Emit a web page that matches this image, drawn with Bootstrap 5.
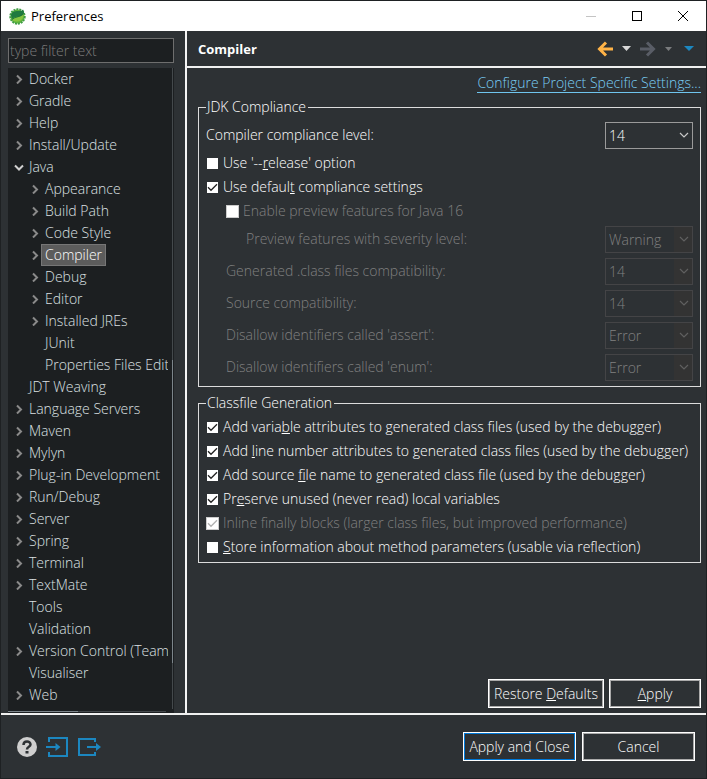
<!DOCTYPE html>
<html lang="en">
<head>
<meta charset="utf-8">
<meta name="viewport" content="width=device-width, initial-scale=1">
<title>Preferences</title>
<link href="https://cdn.jsdelivr.net/npm/bootstrap@5.3.0/dist/css/bootstrap.min.css" rel="stylesheet">
<style>
  :root { --bg: #2d3134; --tree: #1c1f21; --line: #dcdcdc; --fg: #fff; --dim: #808080; }
  body { font-family: "Open Sans", "Noto Sans", sans-serif; font-size: 14px; font-weight: 300; line-height: 20px; background: var(--bg); color: var(--fg); }
  .window-frame { border: 1px solid #1e2123; }
  .title-bar { background: #fff; color: #000; height: 30px; padding-left: 8px; font-weight: 400; font-size: 13px; }
  .app-name { padding-left: 5px; }
  .win-btn { width: 46px; height: 30px; background: none; border: 0; padding: 0; line-height: 0; }
  .sidebar { width: 184px; padding: 7px 11px 0 7px; }
  .filter-box { background: var(--tree); border: 1px solid #6e6e6e; border-radius: 0; color: #ccc; height: 25px; padding: 0 1px; font-size: 14px; font-weight: 300; line-height: 22px; min-height: 0; }
  .filter-box::placeholder { color: #7c7c7c; opacity: 1; }
  .filter-box:focus { background: var(--tree); color: #ccc; box-shadow: none; }
  .tree-box { background: var(--tree); color: #dde1e3; margin-top: 5px; }
  .tree-list li { height: 22px; padding-left: 6px; white-space: nowrap; display: flex; align-items: center; }
  .tree-list .sub-item { padding-left: 22px; }
  .tree-list .leaf { padding-left: 16px; }
  .tree-list .sub-item.leaf { padding-left: 32px; }
  .twisty { width: 10px; height: 10px; flex: none; margin-right: 1px; fill: none; stroke: #8a8a8a; stroke-width: 2; }
  .twisty.open { stroke: #d0d0d0; }
  .tree-list a { color: inherit; text-decoration: none; padding: 0 3px; border: 1px solid transparent; }
  .tree-list .leaf a { margin-left: 1px; }
  .tree-list a.picked { background: #5c5c5c; border-color: #767676; color: #fff; }
  .v-track { width: 1px; background: #44494c; margin: 0 1px 2px 4px; padding-top: 292px; }
  .v-thumb { background: #7c858b; height: 303px; }
  .h-track { height: 1px; background: #44494c; margin: 0 8px 1px 0; }
  .h-thumb { background: #7c858b; height: 1px; width: 44%; }
  .main-pane { border-left: 2px solid #f4f4f4; min-width: 0; }
  .page-head { height: 37px; border-bottom: 2px solid #f0f0f0; padding: 0 12px 0 11px; }
  .page-head h1 { font-size: 13px; font-weight: 700; color: #fff; line-height: 20px; }
  .tool-row { gap: 9px; }
  .tool-btn { background: none; border: 0; padding: 0; line-height: 0; }
  .view-menu { margin-left: 3px; }
  .page-body { padding: 5px 5px 5px 11px; }
  .link-row { height: 24px; }
  .settings-link { color: #79cdf5; text-decoration: none; border-bottom: 1px solid #6fc5ee; line-height: 18px; display: inline-block; }
  .group-box { border: 1px solid var(--line); padding: 2px 7px 3px; margin: 0 0 6px; }
  .group-box legend { float: none; width: auto; font-size: 14px; line-height: 20px; padding: 0 2px 0 1px; margin: 0; }
  .opt-row { height: 24px; }
  .combo-row { height: 32px; }
  .off { color: var(--dim); }
  .level-1 { padding-left: 20px; }
  .level-2 { padding-left: 40px; }
  .tick { appearance: none; width: 11px; height: 11px; margin: 0 5px 0 1px; background: #fff center / 11px 11px no-repeat; flex: none; }
  .tick:checked { background-image: url("data:image/svg+xml,%3Csvg xmlns='http://www.w3.org/2000/svg' viewBox='0 0 11 11'%3E%3Cpath d='M1 5.3L4 8.3L10 2.3' fill='none' stroke='%23222' stroke-width='1.3'/%3E%3C/svg%3E"); }
  .tick:disabled { width: 13px; height: 13px; margin: 0 4px 0 0; border: 1px solid #ccc; }
  .tick:disabled:checked { background-image: url("data:image/svg+xml,%3Csvg xmlns='http://www.w3.org/2000/svg' viewBox='0 0 11 11'%3E%3Cpath d='M1 5.3L4 8.3L10 2.3' fill='none' stroke='%23b0b0b0' stroke-width='1.3'/%3E%3C/svg%3E"); }
  .combo { width: 88px; height: 27px; min-height: 0; padding: 0 18px 0 3px; border: 1px solid #9a9a9a; border-radius: 0; color: var(--fg); font-size: 14px; font-weight: 300; line-height: 25px;
    background: var(--bg) url("data:image/svg+xml,%3Csvg xmlns='http://www.w3.org/2000/svg' viewBox='0 0 10 6'%3E%3Cpath d='M1 1L5 5L9 1' fill='none' stroke='%23c8c8c8' stroke-width='1.2'/%3E%3C/svg%3E") right 3px center / 10px 6px no-repeat; }
  .combo:disabled { color: var(--dim); opacity: 1; border-color: #444446; background-color: var(--bg);
    background-image: url("data:image/svg+xml,%3Csvg xmlns='http://www.w3.org/2000/svg' viewBox='0 0 10 6'%3E%3Cpath d='M1 1L5 5L9 1' fill='none' stroke='%23606060' stroke-width='1.2'/%3E%3C/svg%3E"), linear-gradient(#333,#333); background-position: right 3px center, right center; background-size: 10px 6px, 18px 100%; }
  .flat-btn { background: var(--bg); color: var(--fg); border: 1px solid #fff; outline: 1px solid #aaa; outline-offset: -2px; border-radius: 0; height: 29px; min-width: 92px; padding: 0 5px; font-size: 14px; font-weight: 300; line-height: 27px; }
  .flat-btn:hover { background: #3a3f43; color: #fff; border-color: #fff; }
  .flat-btn.wide { min-width: 113px; }
  .flat-btn.default-btn { outline-color: #0078d7; }
  .page-buttons { gap: 5px; }
  .foot-bar { border-top: 2px solid #f0f0f0; height: 65px; padding: 0 11px 0 16px; }
  .foot-icons { gap: 9px; }
  .foot-buttons { gap: 6px; }
</style>
</head>
<body>
<svg class="d-none" aria-hidden="true">
  <symbol id="closed" viewBox="0 0 10 10"><path d="M3 1.5L7 5.5L3 9.5"/></symbol>
  <symbol id="opened" viewBox="0 0 10 10"><path d="M1 3.5L5 7.5L9 3.5"/></symbol>
</svg>
<div class="window-frame d-flex flex-column min-vh-100">
  <header class="title-bar d-flex align-items-center">
    <svg width="17" height="17" viewBox="0 0 17 17" aria-hidden="true">
      <circle cx="8.5" cy="8.5" r="7" fill="#5fb33c"/>
      <circle cx="8.5" cy="8.5" r="7.3" fill="none" stroke="#3e9c43" stroke-width="1.8" stroke-dasharray="2 1"/>
      <path d="M2 7C3 3 7 3 10 3C12 3 13 2.500 14 1.500C16 5 15 8 11 8.500C8 9 5 8.500 3 11Z" fill="#1f7a3f"/>
      <path d="M3 12C6 8.500 10 10 14.500 6C15 11 11 14 7 13.500C5 13.300 4 12.800 3 12Z" fill="#86c540"/>
      <path d="M3 11.500C6 8.500 10 9.500 14 6.500" fill="none" stroke="#176b3a" stroke-width=".8"/>
    </svg>
    <span class="app-name flex-grow-1">Preferences</span>
    <button class="win-btn" type="button" aria-label="Minimize"><svg width="10" height="10"><path d="M0 5.5H10" stroke="#c4c4c4"/></svg></button>
    <button class="win-btn" type="button" aria-label="Maximize"><svg width="10" height="10"><rect x=".5" y=".5" width="9" height="9" fill="none" stroke="#000"/></svg></button>
    <button class="win-btn" type="button" aria-label="Close"><svg width="10" height="10"><path d="M0 0L10 10M10 0L0 10" stroke="#000"/></svg></button>
  </header>

  <div class="d-flex flex-grow-1">
    <nav class="sidebar flex-shrink-0 d-flex flex-column" aria-label="Preference pages">
      <input class="form-control filter-box" type="text" placeholder="type filter text" aria-label="Filter">
      <div class="tree-box d-flex flex-column flex-grow-1">
        <div class="d-flex flex-grow-1">
          <ul class="tree-list list-unstyled mb-0 flex-grow-1 overflow-hidden">
            <li><svg class="twisty"><use href="#closed"/></svg><a href="#">Docker</a></li>
            <li><svg class="twisty"><use href="#closed"/></svg><a href="#">Gradle</a></li>
            <li><svg class="twisty"><use href="#closed"/></svg><a href="#">Help</a></li>
            <li><svg class="twisty"><use href="#closed"/></svg><a href="#">Install/Update</a></li>
            <li><svg class="twisty open"><use href="#opened"/></svg><a href="#">Java</a></li>
            <li class="sub-item"><svg class="twisty"><use href="#closed"/></svg><a href="#">Appearance</a></li>
            <li class="sub-item"><svg class="twisty"><use href="#closed"/></svg><a href="#">Build Path</a></li>
            <li class="sub-item"><svg class="twisty"><use href="#closed"/></svg><a href="#">Code Style</a></li>
            <li class="sub-item"><svg class="twisty"><use href="#closed"/></svg><a href="#" class="picked" aria-current="page">Compiler</a></li>
            <li class="sub-item"><svg class="twisty"><use href="#closed"/></svg><a href="#">Debug</a></li>
            <li class="sub-item"><svg class="twisty"><use href="#closed"/></svg><a href="#">Editor</a></li>
            <li class="sub-item"><svg class="twisty"><use href="#closed"/></svg><a href="#">Installed JREs</a></li>
            <li class="sub-item leaf"><a href="#">JUnit</a></li>
            <li class="sub-item leaf"><a href="#">Properties Files Editor</a></li>
            <li class="leaf"><a href="#">JDT Weaving</a></li>
            <li><svg class="twisty"><use href="#closed"/></svg><a href="#">Language Servers</a></li>
            <li><svg class="twisty"><use href="#closed"/></svg><a href="#">Maven</a></li>
            <li><svg class="twisty"><use href="#closed"/></svg><a href="#">Mylyn</a></li>
            <li><svg class="twisty"><use href="#closed"/></svg><a href="#">Plug-in Development</a></li>
            <li><svg class="twisty"><use href="#closed"/></svg><a href="#">Run/Debug</a></li>
            <li><svg class="twisty"><use href="#closed"/></svg><a href="#">Server</a></li>
            <li><svg class="twisty"><use href="#closed"/></svg><a href="#">Spring</a></li>
            <li><svg class="twisty"><use href="#closed"/></svg><a href="#">Terminal</a></li>
            <li><svg class="twisty"><use href="#closed"/></svg><a href="#">TextMate</a></li>
            <li class="leaf"><a href="#">Tools</a></li>
            <li class="leaf"><a href="#">Validation</a></li>
            <li><svg class="twisty"><use href="#closed"/></svg><a href="#">Version Control (Team)</a></li>
            <li class="leaf"><a href="#">Visualiser</a></li>
            <li><svg class="twisty"><use href="#closed"/></svg><a href="#">Web</a></li>
          </ul>
          <div class="v-track"><div class="v-thumb"></div></div>
        </div>
        <div class="h-track"><div class="h-thumb"></div></div>
      </div>
    </nav>

    <main class="main-pane flex-grow-1 d-flex flex-column">
      <div class="page-head d-flex align-items-center">
        <h1 class="mb-0 flex-grow-1">Compiler</h1>
        <div class="tool-row d-flex align-items-center">
          <button class="tool-btn" type="button" aria-label="Back"><svg width="16" height="16"><path d="M16 8H3M9 1.500L2.500 8L9 14.500" fill="none" stroke="#ffb347" stroke-width="3"/></svg></button>
          <button class="tool-btn" type="button" aria-label="Back history"><svg width="9" height="5"><path d="M0 0H9L4.500 5Z" fill="#d8d8d8"/></svg></button>
          <button class="tool-btn" type="button" aria-label="Forward"><svg width="16" height="16"><path d="M0 8H13M7 1.500L13.500 8L7 14.500" fill="none" stroke="#595d66" stroke-width="3"/></svg></button>
          <button class="tool-btn" type="button" aria-label="Forward history"><svg width="7" height="4"><path d="M0 0H7L3.500 4Z" fill="#7a7c7e"/></svg></button>
          <button class="tool-btn view-menu" type="button" aria-label="Menu"><svg width="10" height="5"><path d="M0 0H10L5 5Z" fill="#1c87c0"/></svg></button>
        </div>
      </div>

      <div class="page-body flex-grow-1 d-flex flex-column">
        <div class="link-row text-end"><a class="settings-link" href="#">Configure Project Specific Settings...</a></div>

        <fieldset class="group-box">
          <legend>JDK Compliance</legend>
          <div class="combo-row d-flex align-items-center justify-content-between">
            <label for="level">Compiler compliance level:</label>
            <select class="form-select combo" id="level"><option>14</option></select>
          </div>
          <div class="opt-row d-flex align-items-center"><input class="tick" type="checkbox" id="release"><label for="release">Use '--<u>r</u>elease' option</label></div>
          <div class="opt-row d-flex align-items-center"><input class="tick" type="checkbox" id="defaults" checked><label for="defaults">Use defaul<u>t</u> compliance settings</label></div>
          <div class="opt-row level-1 off d-flex align-items-center"><input class="tick" type="checkbox" id="preview" disabled><label for="preview">Enable preview features for Java 16</label></div>
          <div class="combo-row level-2 off d-flex align-items-center justify-content-between">
            <label for="severity">Preview features with severity level:</label>
            <select class="form-select combo" id="severity" disabled><option>Warning</option></select>
          </div>
          <div class="combo-row level-1 off d-flex align-items-center justify-content-between">
            <label for="target">Generated .class files compatibility:</label>
            <select class="form-select combo" id="target" disabled><option>14</option></select>
          </div>
          <div class="combo-row level-1 off d-flex align-items-center justify-content-between">
            <label for="source">Source compatibility:</label>
            <select class="form-select combo" id="source" disabled><option>14</option></select>
          </div>
          <div class="combo-row level-1 off d-flex align-items-center justify-content-between">
            <label for="assert">Disallow identifiers called 'assert':</label>
            <select class="form-select combo" id="assert" disabled><option>Error</option></select>
          </div>
          <div class="combo-row level-1 off d-flex align-items-center justify-content-between">
            <label for="enum">Disallow identifiers called 'enum':</label>
            <select class="form-select combo" id="enum" disabled><option>Error</option></select>
          </div>
        </fieldset>

        <fieldset class="group-box">
          <legend>Classfile Generation</legend>
          <div class="opt-row d-flex align-items-center"><input class="tick" type="checkbox" id="vars" checked><label for="vars">Add varia<u>b</u>le attributes to generated class files (used by the debugger)</label></div>
          <div class="opt-row d-flex align-items-center"><input class="tick" type="checkbox" id="lines" checked><label for="lines">Add <u>l</u>ine number attributes to generated class files (used by the debugger)</label></div>
          <div class="opt-row d-flex align-items-center"><input class="tick" type="checkbox" id="file" checked><label for="file">Add source <u>f</u>ile name to generated class file (used by the debugger)</label></div>
          <div class="opt-row d-flex align-items-center"><input class="tick" type="checkbox" id="unused" checked><label for="unused">Pr<u>e</u>serve unused (never read) local variables</label></div>
          <div class="opt-row off d-flex align-items-center"><input class="tick" type="checkbox" id="inline" checked disabled><label for="inline">Inline finally blocks (larger class files, but improved performance)</label></div>
          <div class="opt-row d-flex align-items-center"><input class="tick" type="checkbox" id="params"><label for="params"><u>S</u>tore information about method parameters (usable via reflection)</label></div>
        </fieldset>

        <div class="page-buttons d-flex justify-content-end mt-auto">
          <button class="btn flat-btn" type="button">Restore <u>D</u>efaults</button>
          <button class="btn flat-btn" type="button"><u>A</u>pply</button>
        </div>
      </div>
    </main>
  </div>

  <footer class="foot-bar d-flex align-items-center justify-content-between">
    <div class="foot-icons d-flex align-items-center">
      <button class="tool-btn" type="button" aria-label="Help"><svg width="20" height="20"><circle cx="10" cy="10" r="10" fill="#cfcfcf"/><path d="M6.500 8C6.500 3.500 13.500 3.500 13.500 7.500C13.500 10 10 9.500 10 12.500" fill="none" stroke="#2d3134" stroke-width="2.500"/><rect x="8.500" y="14" width="3" height="2.500" fill="#2d3134"/></svg></button>
      <button class="tool-btn" type="button" aria-label="Import"><svg width="22" height="20" fill="none" stroke="#1c87c0" stroke-width="2"><path d="M3 5V1H21V19H3V15"/><path d="M0 10H11"/><path d="M9.500 6L14.500 10L9.500 14Z" fill="#1c87c0" stroke="none"/></svg></button>
      <button class="tool-btn" type="button" aria-label="Export"><svg width="25" height="20" fill="none" stroke="#1c87c0" stroke-width="2"><path d="M18 5V2H2V18H18V15"/><path d="M10 10H21"/><path d="M19 6L24 10L19 14Z" fill="#1c87c0" stroke="none"/></svg></button>
    </div>
    <div class="foot-buttons d-flex">
      <button class="btn flat-btn wide default-btn" type="button">Apply and Close</button>
      <button class="btn flat-btn wide" type="button">Cancel</button>
    </div>
  </footer>
</div>
<script src="https://cdn.jsdelivr.net/npm/bootstrap@5.3.0/dist/js/bootstrap.bundle.min.js"></script>
</body>
</html>
